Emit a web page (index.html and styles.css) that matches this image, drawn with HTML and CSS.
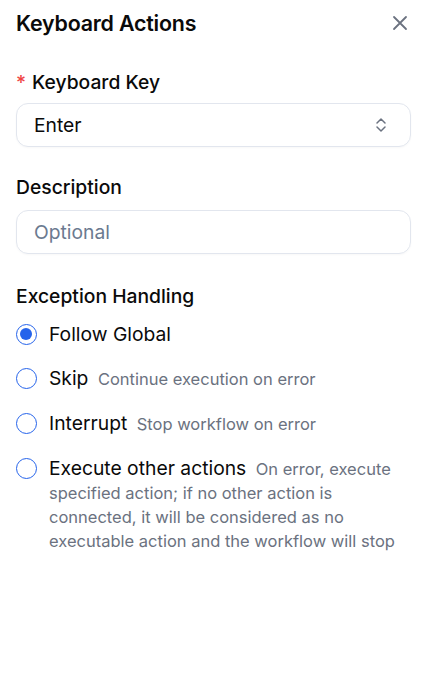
FILE: index.html
```html
<!DOCTYPE html>
<html>
<head>
<meta charset="utf-8">
<link rel="stylesheet" href="styles.css">
</head>
<body>
<div class="panel">
  <div class="header">
    <h1 class="title">Keyboard Actions</h1>
    <svg class="close" width="18" height="18" viewBox="0 0 18 18"><path d="M3 3L15 15M15 3L3 15" stroke="#6b7280" stroke-width="1.8" stroke-linecap="round"/></svg>
  </div>
  <div class="field">
    <div class="label"><span class="req">*</span>Keyboard Key</div>
    <div class="input select">
      <span class="value">Enter</span>
      <svg class="chev" width="14" height="18" viewBox="0 0 14 18"><path d="M3 7L7 3L11 7M3 11L7 15L11 11" fill="none" stroke="#6b7280" stroke-width="1.5" stroke-linecap="round" stroke-linejoin="round"/></svg>
    </div>
  </div>
  <div class="field desc">
    <div class="label">Description</div>
    <div class="input"><span class="placeholder">Optional</span></div>
  </div>
  <div class="field ex">
    <div class="label">Exception Handling</div>
    <div class="radios">
      <div class="radio"><span class="dot checked"></span><div class="rtext"><span class="rlabel">Follow Global</span></div></div>
      <div class="radio"><span class="dot"></span><div class="rtext"><span class="rlabel">Skip</span> <span class="rdesc">Continue execution on error</span></div></div>
      <div class="radio"><span class="dot"></span><div class="rtext"><span class="rlabel">Interrupt</span> <span class="rdesc">Stop workflow on error</span></div></div>
      <div class="radio"><span class="dot"></span><div class="rtext"><span class="rlabel">Execute other actions</span> <span class="rdesc">On error, execute specified action; if no other action is connected, it will be considered as no executable action and the workflow will stop</span></div></div>
    </div>
  </div>
</div>
</body>
</html>
```
FILE: styles.css
```css
html, body { margin: 0; padding: 0; background: #fff; }
body { font-family: Inter, "Noto Sans", sans-serif; color: #0a0a0a; }
.panel { padding: 0 13px 0 16px; }
.header { display: flex; align-items: center; justify-content: space-between; height: 46px; }
.title { margin: 0; font-size: 21.4px; font-weight: 600; letter-spacing: -0.2px; }
.close { margin-right: 2px; }
.field { margin-top: 24px; }
.field + .field { margin-top: 28px; }
.label { font-size: 19.3px; font-weight: 500; line-height: 24px; margin-bottom: 9px; }
.desc .label { margin-bottom: 11px; }
.req { color: #ef4444; margin-right: 6px; }
.input { height: 44px; box-sizing: border-box; border: 1px solid #e2e6ee; border-radius: 12px; display: flex; align-items: center; justify-content: space-between; padding: 0 22px 0 17px; font-size: 19.3px; box-shadow: 0 1px 2px rgba(0,0,0,0.03); }
.placeholder { color: #6b7a90; }
.field.ex { margin-top: 30px; }
.ex .label { margin-bottom: 15px; }
.radios { display: flex; flex-direction: column; gap: 21px; }
.radio { display: flex; align-items: flex-start; }
.dot { width: 21px; height: 21px; box-sizing: border-box; border: 1.5px solid #2563eb; border-radius: 50%; flex: none; margin-top: 1px; margin-right: 12px; margin-left: 0; position: relative; }
.dot.checked::after { content: ""; position: absolute; left: 3px; top: 3px; width: 12px; height: 12px; border-radius: 50%; background: #2563eb; }
.rtext { font-size: 19.3px; line-height: 23px; }
.rlabel { margin-right: 4px; }
.rdesc { font-size: 16.5px; line-height: 23px; color: #6b7280; }
```
